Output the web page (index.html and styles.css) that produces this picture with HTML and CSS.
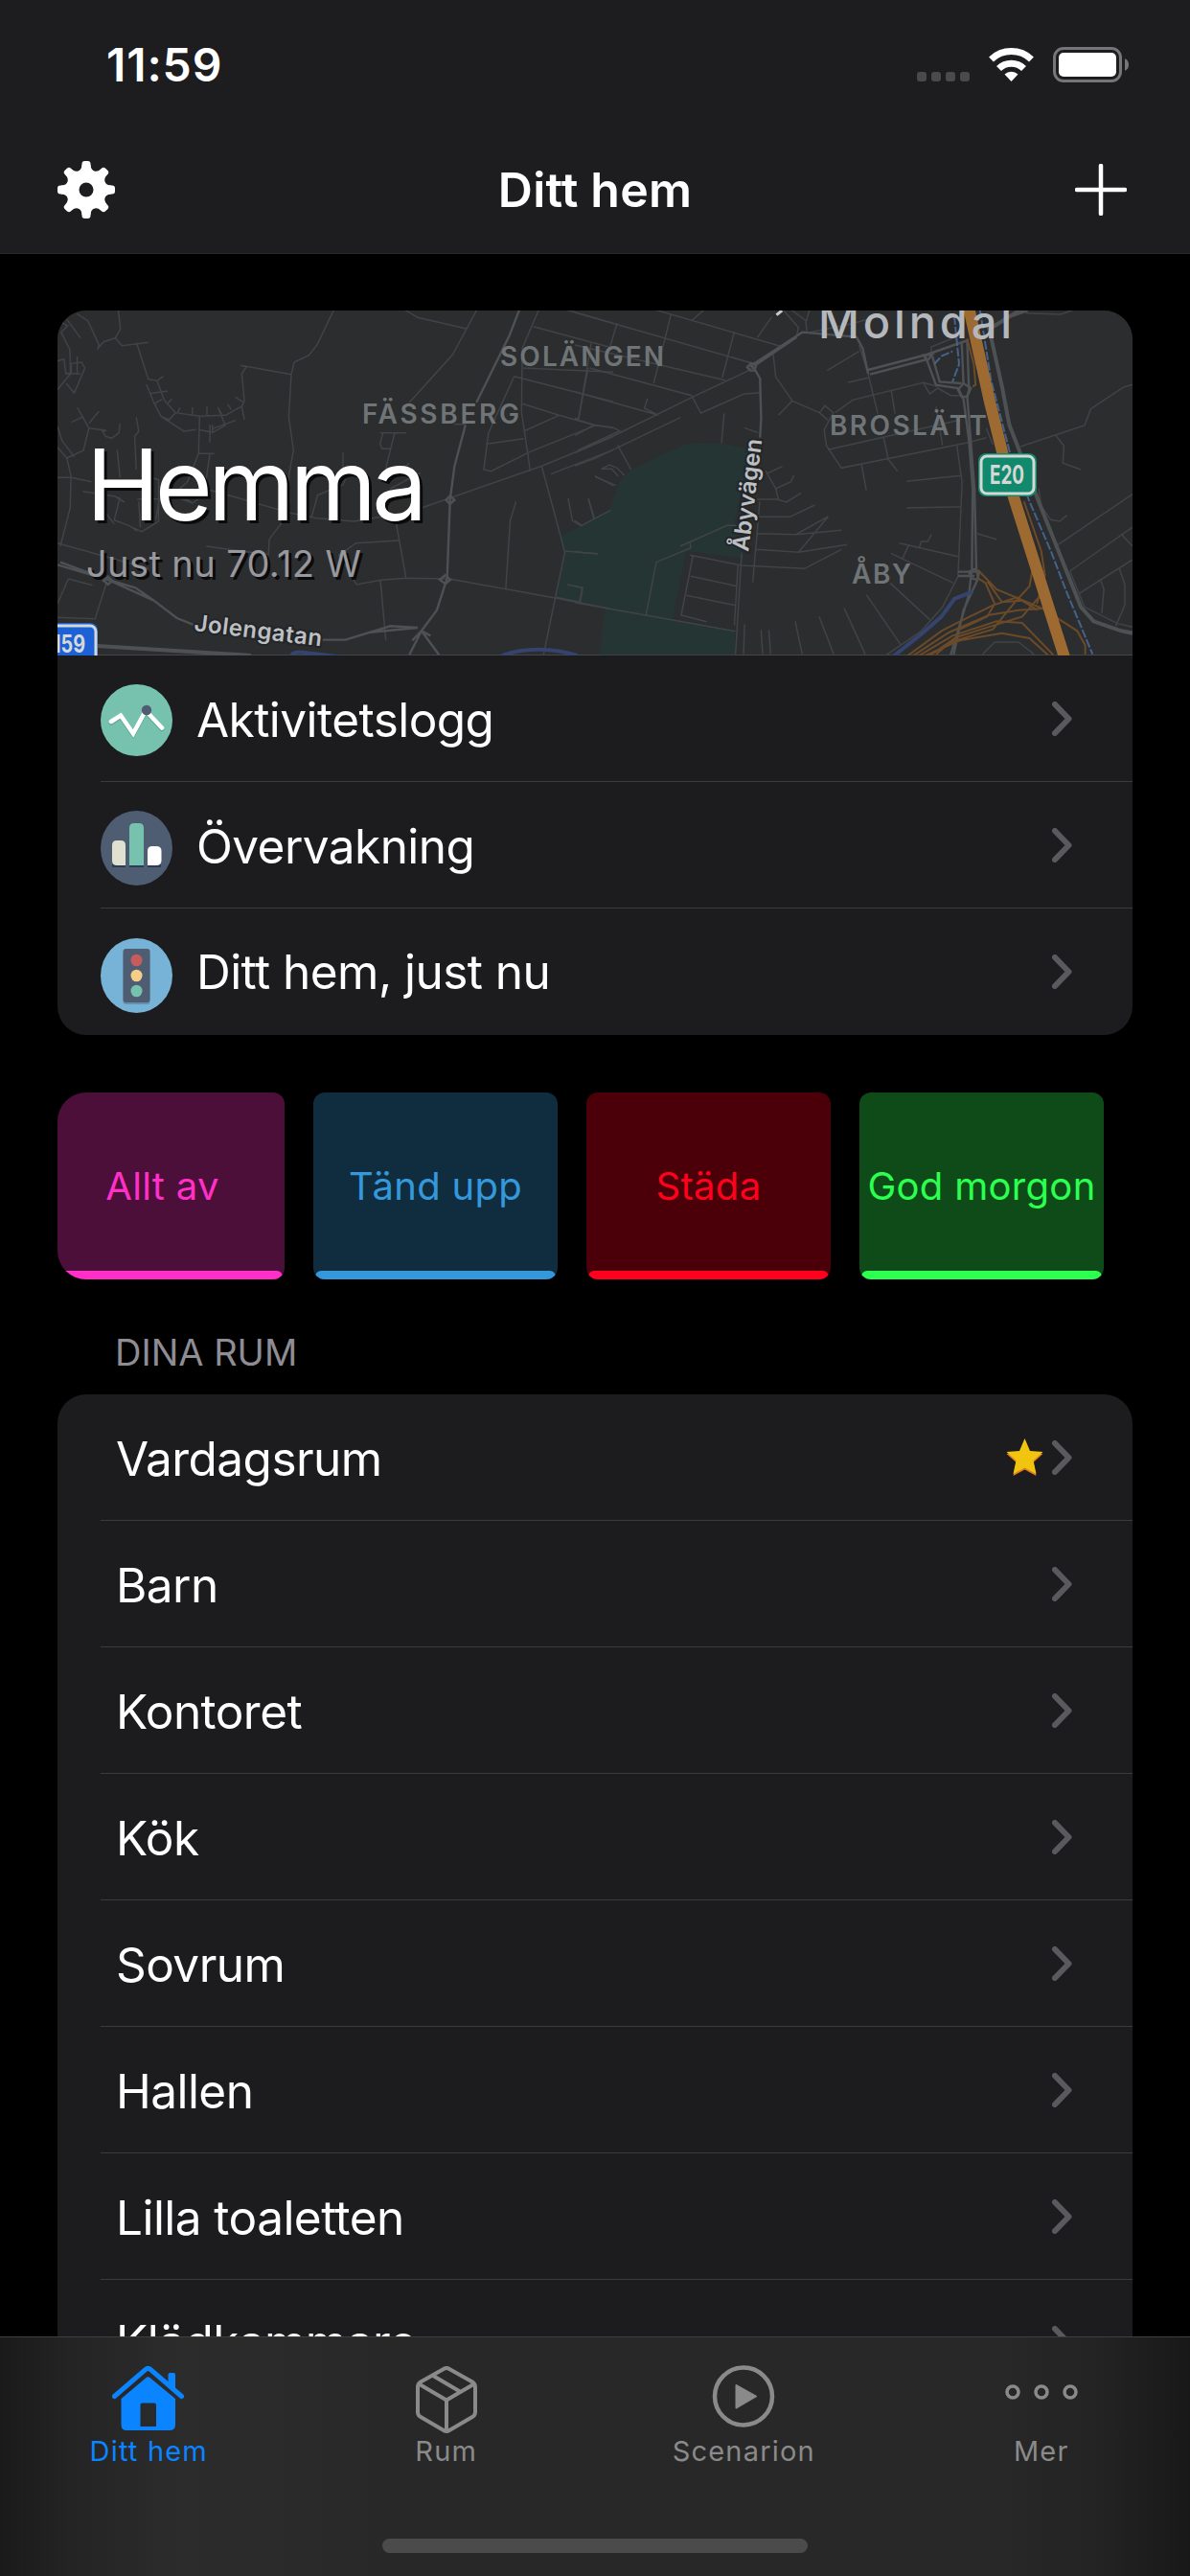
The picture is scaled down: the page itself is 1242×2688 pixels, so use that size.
FILE: index.html
```
<!DOCTYPE html>
<html lang="sv">
<head>
	<meta charset="UTF-8">
	<title>Ditt hem</title>
	<link rel="stylesheet" href="styles.css">
</head>
<body>
	<svg width="0" height="0" class="defs">
		<symbol id="chevron" viewBox="0 0 21 36">
			<path d="M3 3L17.500 18L3 33" fill="none" stroke="#5a5a5e" stroke-width="6" stroke-linecap="round" stroke-linejoin="round"/>
		</symbol>
	</svg>
	<div class="phone">
		<header class="top">
			<div class="statusBar">
				<span class="time">11:59</span>
				<div class="statusIcons">
					<svg width="222" height="38" viewBox="957 49 222 38">
						<g fill="#4a4a4c">
							<rect x="957" y="75" width="10" height="10" rx="3"/>
							<rect x="972" y="75" width="10" height="10" rx="3"/>
							<rect x="987" y="75" width="10" height="10" rx="3"/>
							<rect x="1002" y="75" width="10" height="10" rx="3"/>
						</g>
						<path d="M1055.500 85L1048.500 77.500A10.500 10.500 0 0 1 1062.500 77.500Z" fill="#fff"/>
						<path d="M1042.500 71.500A18.500 18.500 0 0 1 1068.500 71.500M1034.500 62A30.500 30.500 0 0 1 1076.500 62" fill="none" stroke="#fff" stroke-width="7"/>
						<rect x="1100.500" y="50.500" width="69" height="34" rx="9.500" fill="none" stroke="#767678" stroke-width="3"/>
						<rect x="1105" y="55" width="60" height="25" rx="5" fill="#fff"/>
						<path d="M1174 61Q1178 63 1178 67.500T1174 74Z" fill="#767678"/>
					</svg>
				</div>
			</div>
			<nav class="navBar">
				<svg width="60" height="60" viewBox="-30 -30 60 60">
					<g fill="#fff">
						<g id="teeth">
							<rect x="-4.500" y="-30" width="9" height="60" rx="3"/>
							<path d="M-9 -19Q-4.500 -21 -4.500 -26H4.500Q4.500 -21 9 -19V19Q4.500 21 4.500 26H-4.500Q-4.500 21 -9 19Z"/>
						</g>
						<use href="#teeth" transform="rotate(45)"/>
						<use href="#teeth" transform="rotate(90)"/>
						<use href="#teeth" transform="rotate(135)"/>
						<circle r="20.500"/>
					</g>
					<circle r="7.500" fill="#1d1d1f"/>
				</svg>
				<h1>Ditt hem</h1>
				<svg width="54" height="54" viewBox="0 0 54 54">
					<path d="M27 2V52M2 27H52" stroke="#fff" stroke-width="4.500" stroke-linecap="round"/>
				</svg>
			</nav>
		</header>

		<main>
			<section class="card home">
				<div class="map">
					<svg width="1122" height="360" viewBox="60 324 1122 360">
						<!-- left half of the map -->
						<g transform="translate(40 310) scale(.38265 .33333)" class="roads">
							<path class="park" d="M1424 750L1558 668L1583 580L1616 540L1767 460L1865 457L1945 480L1925 570L1895 720L1925 818L1767 795L1730 1008L1900 1046V1120H1530L1545 976L1412 940L1435 800Z"/>
							<path d="M218 40L224 100L210 128L228 152L301 142M210 128L178 140L163 160L165 148L135 74L105 52M268 143L300 257L324 262L343 322L374 362L440 373L510 370L555 342L562 325L555 240L568 218L552 214L690 242M690 242L698 204L738 182L760 150L806 40M690 242L683 374L696 480L683 560L686 640L668 700L630 758L628 806L458 780"/>
							<path d="M374 362L357 384L335 374L315 330L295 274M335 374L397 420L430 415M324 262L341 248M303 302L353 294M315 335L337 320M352 333L364 320M380 362L386 346M420 368V345M460 370V343M500 366L490 345L510 402L475 424L437 415M526 352L516 335M555 342L562 384M558 328L537 313M475 424V400M475 412L538 386M440 373L437 490L406 580L380 605M437 490H480M468 490L458 570M468 400V455"/>
							<path d="M52 200L70 194L75 240L90 236V208L118 204L127 222L98 300L76 270M106 186V240M52 290L88 240L86 164L62 110L80 90L52 72M78 70L115 128M75 240H115M106 345L138 410L123 480L78 504L52 470M52 404L65 450L98 500M138 410L186 418L175 420L184 436L200 442L220 425L223 396M90 392L123 374M138 395L165 358M267 376L274 420L263 436L267 540M215 478L223 565M78 504L89 560L87 660L60 780"/>
							<path d="M52 565H89L145 578M121 608L210 624L235 642M205 622L222 630L207 698L240 712L282 735L328 702V572L310 566M180 670L207 710M270 632H330L320 700M278 720L274 640M254 720L270 732M385 630L420 645L470 605L500 614L687 676L760 692L860 702L975 680M420 645L400 630M745 690L762 620L830 588L838 570M831 487V545M975 700L1003 880M932 425H1003M972 425L949 530L955 570L1012 520M940 425L932 460L938 475H962M1042 550L960 600"/>
							<path d="M52 770L300 850M1012 330L1130 180L1196 40M1000 40L1035 64L1170 100M1165 398H1135M984 762L867 770L820 808L868 900L935 886L1003 880L1120 882L1410 942L1560 976M933 886L948 1075M1303 640L1287 700L1275 912M52 1003L155 1007L187 890M82 882L148 902M82 882L52 960M1410 942L1378 1120M1436 795L1526 804M1443 900L1485 910L1478 955L1412 940"/>
							<path d="M1365 40L1320 160L1318 360L1342 545M1350 92L1568 160M1440 40L1568 82M1508 145L1474 380M1298 248L1228 425L1215 540L1235 545L1340 485L1520 402L1420 370L1316 332M1298 248L1568 328M1322 222L1568 235M1220 460L1324 443M1324 420L1420 370M1568 408L1520 402M1045 660L1375 528L1568 437M1398 554L1568 478M1373 530L1425 750L1436 800L1410 940M1445 630L1457 700L1480 716L1560 668M1500 632L1517 692M1518 560L1568 590"/>
							<g class="main">
								<path d="M1312 40L1285 120L1195 330M1165 400L1135 530L1123 635L1115 880L1087 980L1045 1045L1012 1120M1045 1045L1093 1120M1045 1045L1020 1075M1035 1035L960 1030L838 1073H775M1035 1035L900 1050M52 838L190 885L265 910L315 950L378 1005L440 1033M60 830L190 885L315 950M1070 1060L1045 1045"/>
								<path d="M1112 635L1123 622L1135 635L1123 648ZM1095 885L1110 870L1124 885L1110 898ZM178 888L190 875L202 888L190 900Z"/>
								<path class="wide" d="M160 1092L580 1122"/>
							</g>
							<path d="M690 1120Q700 1110 720 1112L850 1130M1265 1122Q1360 1085 1470 1122" class="water"/>
						</g>
						<!-- right half of the map -->
						<g transform="translate(600 310) scale(.38265 .33333)" class="roads">
							<path d="M0 48L496 211M220 40L565 155M115 82L95 160M262 55L215 270M435 108L402 252M0 150L410 260M40 222L318 308L344 363L460 304L505 299M36 222L10 380M0 296L228 370L190 348L198 318M0 382L52 400L108 410L130 424L125 420M52 400L0 434M0 380H10M320 72L352 40M498 126L537 62M0 528L55 505L288 377M407 364L400 457M117 464L153 540M72 538L95 525L115 535L135 558M72 538H100L118 560M55 562L112 590M37 630L52 695M0 700L20 715M462 409L500 425"/>
							<path d="M0 488L110 432L330 308L470 232L620 110M8 480L120 420"/>
							<path d="M541 180L548 250L593 325L555 370M593 325L667 362L682 340L705 362L680 415L686 465L727 535L1073 455L1122 440M667 362L690 385M690 478L1050 385M710 362L758 322L950 268L968 303L990 285L1025 308H1055M950 268L990 280M863 292L873 365M985 343L1003 465M842 440L855 508L880 545M782 525L795 605M688 230L775 170M745 267L800 253M775 150L800 240L826 365M1122 410L1140 462"/>
							<path d="M905 577L1052 559M905 660L1055 656M1042 465L1056 580L1045 875L1003 970L945 1045L850 1120M1056 740M1097 740L1150 758M862 802L1032 895M885 770L1045 812M893 820L910 778M940 782L945 765H963L972 743M860 895L968 1010M795 932L890 1090M734 973L792 1118M666 1000L706 1118M601 1015L620 1118M529 1042L534 1118M508 1042L512 1118M463 1024L460 1118"/>
							<path d="M520 543L548 600L555 633M525 552L566 530M548 600L590 577L597 558M485 633H550L577 642L617 613M500 688H587L654 651M497 740L603 743L727 730M494 790L610 799L691 687M603 743L691 687M610 799L743 775M455 840L626 850L727 790M504 640L497 740L485 893M445 840L435 1028M314 808L455 840M322 810L290 996L360 1016M316 874L442 905M304 934L438 965M287 780L415 715H440M314 768L316 785L222 830L194 995M0 797L62 803M0 906L20 910L13 955M0 956L438 1046M455 800L438 1120"/>
							<path d="M1215 468L1390 402L1407 350L1495 283L1521 274M1310 430L1334 466L1331 520L1380 540M1265 600L1272 655L1298 697L1322 702L1342 683M1318 775L1521 617M1350 858L1521 720M1375 928L1521 822M1350 858L1390 970L1480 1022L1521 1033M1490 742L1521 780M1485 850L1500 900V965L1475 1030M1433 882L1443 915L1437 990M1112 1118L1145 1080H1210L1252 1118M1230 50L1325 54L1360 40M972 180V156L1050 120M640 40L630 80L633 110M568 40L610 95L605 120M590 40L632 75M635 112L750 85L830 60"/>
							<g class="main">
								<path d="M505 440L508 380L505 255L490 225L480 215L540 170L620 110L700 118L768 125L785 160L800 240M495 211L605 125M800 228L960 180L1072 135M805 242L960 195M955 182L985 275L1045 285L1060 320L1075 450L1085 600L1083 850L1075 930L1025 1120M975 185L995 265L1055 270M1055 140L1060 270M1070 140L1075 290L1070 310L1090 600L1095 850L1100 880L1060 980L1033 1120M1045 860H1100M1045 873H1090"/>
								<path d="M950 182L962 198L975 180ZM1045 290L1060 270L1080 285L1070 312H1055ZM470 220L480 207L495 212L490 230H478ZM1075 860L1090 852L1102 865L1098 885L1080 880Z"/>
								<path class="wide" d="M1235 40L1190 58L1130 100L1165 280L1185 400L1212 480L1265 640L1380 970L1415 1015L1490 1045L1521 1052M1215 40L1145 90"/>
							</g>
							<path class="water" d="M868 1125L945 1055L1000 1000L1035 945L1085 922"/>
							<path class="rail" d="M1105 40L1135 260L1185 480L1240 640L1300 800L1340 920L1412 1118M1035 60L1048 210L1030 265M980 210L1000 185L1030 170"/>
							<g class="ramps">
								<path d="M905 1125L1000 1045L1060 1010L1140 965L1205 940L1262 980M920 1125L1020 1050L1130 995L1210 980L1275 975M935 1125L1030 1060L1150 1015L1220 1020L1305 1120M950 1125L1050 1075L1165 1052L1240 1068L1290 1120M965 1125L1040 1065L1220 1000L1265 940M985 1118L1025 1080L1140 1040L1200 955L1240 905L1250 840"/>
								<path d="M1100 855L1150 915L1275 975L1370 1045L1392 1090V1118M1100 880L1120 895L1145 960L1125 1000L1050 1040M1125 890L1165 955L1220 950M1225 640L1272 795L1282 870L1260 960M1070 130L1088 210L1093 275L1085 280"/>
							</g>
							<path class="motorway" d="M1075 36L1132 330L1195 620L1335 1126"/>
							<path class="tip" d="M550 56L565 42"/>
						</g>
						<g class="district">
							<text x="522" y="382" textLength="171">SOLÄNGEN</text>
							<text x="378" y="442" textLength="164">FÄSSBERG</text>
							<text x="866" y="454" textLength="164">BROSLÄTT</text>
							<text x="889" y="609" textLength="62">ÅBY</text>
						</g>
						<text class="town" x="854" y="353" textLength="202">Mölndal</text>
						<text class="street" transform="translate(202 658) rotate(7)" textLength="134">Jolengatan</text>
						<text class="street" transform="translate(781 576) rotate(-83)" textLength="118">Åbyvägen</text>
						<rect x="1021" y="473" width="61" height="45" rx="8" fill="#11896c"/>
						<rect x="1024" y="476" width="55" height="39" rx="6" fill="none" stroke="#d5d8d6" stroke-width="3"/>
						<text class="shield" x="1033" y="505" font-size="27" textLength="36" lengthAdjust="spacingAndGlyphs">E20</text>
						<rect x="30" y="650" width="72" height="50" rx="8" fill="#1c62d6"/>
						<rect x="33" y="653" width="67" height="50" rx="6" fill="none" stroke="#d5d8d6" stroke-width="3"/>
						<text class="shield" x="55" y="681" font-size="25" textLength="34" lengthAdjust="spacingAndGlyphs">159</text>
					</svg>
					<div class="mapText">
						<h2>Hemma</h2>
						<p>Just nu 70.12 W</p>
					</div>
				</div>
				<div class="row">
					<svg class="icon" viewBox="0 0 75 78">
						<circle cx="37.500" cy="37.500" r="37.500" fill="#77c2ae"/>
						<path d="M11 40.500L21 34L34 53L47 29L64 47" fill="none" stroke="#5fa896" stroke-width="4.500" stroke-linecap="round"/>
						<path d="M11 39L21 32.500L34 51.500L47 27.500L64 45.500" fill="none" stroke="#fff" stroke-width="4.500" stroke-linecap="round"/>
						<circle cx="48" cy="27" r="5.200" fill="#4f5d73"/>
					</svg>
					<span class="label">Aktivitetslogg</span>
					<svg class="chevron"><use href="#chevron"/></svg>
				</div>
				<div class="row">
					<svg class="icon" viewBox="0 0 75 78">
						<ellipse cx="37.500" cy="39" rx="37.500" ry="39" fill="#4f5d73"/>
						<path d="M12 57.500H26M30 57.500H45M49 57.500H63" stroke="#2c3c58" stroke-width="3"/>
						<path d="M26 57V36Q26 31 21 31H17Q12 31 12 36V52Q12 57 17 57Z" fill="#e0e0d1"/>
						<path d="M30 57V18Q30 13 35 13H40Q45 13 45 18V57Z" fill="#77c2ae"/>
						<path d="M49 57V42Q49 37 54 37H58Q63.500 37 63.500 42V52Q63.500 57 58 57Z" fill="#fff"/>
					</svg>
					<span class="label">Övervakning</span>
					<svg class="chevron"><use href="#chevron"/></svg>
				</div>
				<div class="row">
					<svg class="icon" viewBox="0 0 75 78">
						<ellipse cx="37.500" cy="39" rx="37.500" ry="39" fill="#76b3d6"/>
						<rect x="23.500" y="13" width="28" height="56" rx="3" fill="#6291af"/>
						<rect x="23.500" y="11" width="28" height="56" rx="3" fill="#4f5d73"/>
						<ellipse cx="37.500" cy="23" rx="6" ry="6.300" fill="#c75c5c"/>
						<ellipse cx="37.500" cy="39" rx="6" ry="6.300" fill="#f5cf87"/>
						<ellipse cx="37.500" cy="55" rx="6" ry="6.300" fill="#77c2ae"/>
					</svg>
					<span class="label">Ditt hem, just nu</span>
					<svg class="chevron"><use href="#chevron"/></svg>
				</div>
			</section>

			<section class="scenes">
				<div class="scene pink"><span>Allt av</span></div>
				<div class="scene blue"><span>Tänd upp</span></div>
				<div class="scene red"><span>Städa</span></div>
				<div class="scene green"><span>God morgon</span></div>
			</section>

			<h3>DINA RUM</h3>

			<section class="card rooms">
				<div class="row">
					<span class="label">Vardagsrum</span>
					<svg class="star" width="39" height="39" viewBox="0 0 39 39">
						<path d="M19.500 2L25 14.500L38.500 16L28.500 25L31.500 39L19.500 32.500L7.500 39L10.500 25L.5 16L14 14.500Z" fill="#e67e22"/>
						<path d="M19.500 0L25 13L38.500 14L28.500 23L31.500 37L19.500 30.500L7.500 37L10.500 23L.5 14L14 13Z" fill="#f1c40f"/>
					</svg>
					<svg class="chevron"><use href="#chevron"/></svg>
				</div>
				<div class="row"><span class="label">Barn</span><svg class="chevron"><use href="#chevron"/></svg></div>
				<div class="row"><span class="label">Kontoret</span><svg class="chevron"><use href="#chevron"/></svg></div>
				<div class="row"><span class="label">Kök</span><svg class="chevron"><use href="#chevron"/></svg></div>
				<div class="row"><span class="label">Sovrum</span><svg class="chevron"><use href="#chevron"/></svg></div>
				<div class="row"><span class="label">Hallen</span><svg class="chevron"><use href="#chevron"/></svg></div>
				<div class="row"><span class="label">Lilla toaletten</span><svg class="chevron"><use href="#chevron"/></svg></div>
				<div class="row"><span class="label">Klädkammare</span><svg class="chevron"><use href="#chevron"/></svg></div>
			</section>
		</main>

		<footer>
			<div class="tabs">
				<div class="tab active">
					<svg width="76" height="76" viewBox="117 2467 76 76">
						<path d="M119.500 2500.500L152 2472.500Q154.500 2470 157 2472.500L189.500 2500.500" fill="none" stroke="#0a84ff" stroke-width="5" stroke-linecap="round"/>
						<path d="M175.500 2489V2478Q175.500 2476 177.500 2476H181Q183 2476 183 2478V2495Z" fill="#0a84ff"/>
						<path fill-rule="evenodd" d="M126.500 2503L152 2481.500Q154.500 2479 157 2481.500L183 2503V2530Q183 2536 177 2536H132Q126.500 2536 126.500 2530ZM148.500 2507.500Q146.500 2507.500 146.500 2509.500V2532H163V2509.500Q163 2507.500 161 2507.500Z" fill="#0a84ff"/>
					</svg>
					<span>Ditt hem</span>
				</div>
				<div class="tab">
					<svg width="76" height="76" viewBox="427 2467 76 76">
						<g fill="none" stroke="#8a8a8a" stroke-width="4" stroke-linejoin="round">
							<path d="M462 2472Q465 2470 468 2472L492 2485.500Q495 2487.500 495 2491V2517Q495 2520.500 492 2522L468 2536Q465 2538 462 2536L438 2522Q435 2520.500 435 2517V2491Q435 2487.500 438 2485.500Z"/>
							<path d="M436 2487.500L465 2504.500L494 2487.500M465 2504.500V2537M451 2479L479 2495.500"/>
						</g>
					</svg>
					<span>Rum</span>
				</div>
				<div class="tab">
					<svg width="76" height="76" viewBox="738 2467 76 76">
						<circle cx="776" cy="2500.500" r="30" fill="none" stroke="#8a8a8a" stroke-width="4.500"/>
						<path d="M768.500 2489L789 2500.500L768.500 2512.500Z" fill="#8a8a8a" stroke="#8a8a8a" stroke-width="2" stroke-linejoin="round"/>
					</svg>
					<span>Scenarion</span>
				</div>
				<div class="tab">
					<svg width="76" height="76" viewBox="1048 2467 76 76">
						<g fill="none" stroke="#8a8a8a" stroke-width="3.500">
							<circle cx="1056" cy="2496" r="6"/>
							<circle cx="1086" cy="2496" r="6"/>
							<circle cx="1116" cy="2496" r="6"/>
						</g>
					</svg>
					<span>Mer</span>
				</div>
			</div>
			<div class="homeIndicator"></div>
		</footer>
	</div>
</body>
</html>
```
FILE: styles.css
```
* {
	box-sizing: border-box;
}
body, h1, h2, h3, p {
	margin: 0;
	font-weight: 400;
}
body {
	background: #000;
	color: #fff;
	font-family: Inter, "Liberation Sans", sans-serif;
}
svg {
	display: block;
	flex-shrink: 0;
}
.defs {
	position: absolute;
}
.phone {
	width: 1242px;
	height: 2688px;
	display: flex;
	flex-direction: column;
	overflow: hidden;
}

/* status bar and title */
.top {
	height: 265px;
	flex-shrink: 0;
	background: #1d1d1f;
	border-bottom: 1px solid #29292b;
}
.statusBar {
	height: 132px;
	padding: 49px 63px 0 111px;
	display: flex;
	justify-content: space-between;
}
.time {
	font-size: 48px;
	line-height: 38px;
	font-weight: 600;
	letter-spacing: 0.9px;
}
.navBar {
	height: 132px;
	padding: 0 66px 0 60px;
	display: flex;
	align-items: center;
	justify-content: space-between;
}
.navBar h1 {
	font-size: 50px;
	font-weight: 600;
	letter-spacing: 0.2px;
}

/* scrolling content */
main {
	flex: 1;
	min-height: 0;
	overflow: hidden;
	padding: 59px 60px 0;
}
.card {
	background: #1c1c1e;
	border-radius: 30px;
	overflow: hidden;
}
.map {
	height: 360px;
	position: relative;
	background: #2c2d2f;
	border-bottom: 1px solid #464648;
}
.mapText {
	position: absolute;
	left: 30px;
	top: 122px;
	text-shadow: 3px 3px 0 #0a0a0b;
}
.mapText h2 {
	font-size: 103px;
	line-height: 119px;
	letter-spacing: -4.7px;
}
.mapText p {
	font-size: 38px;
	line-height: 46px;
	letter-spacing: 0.4px;
	color: #98989f;
}
.roads path {
	fill: none;
	stroke: #414346;
	stroke-width: 1.5;
	vector-effect: non-scaling-stroke;
}
.roads .main path {
	stroke: #4d5154;
	stroke-width: 2.4;
}
.roads .main path.wide {
	stroke-width: 4;
}
.roads path.park {
	fill: #253534;
	stroke: none;
}
.roads path.water {
	stroke: #34446e;
	stroke-width: 4;
}
.roads path.rail {
	stroke: #45628a;
	stroke-width: 2;
	stroke-dasharray: 9 2;
}
.roads .ramps path {
	stroke: #6b4a27;
	stroke-width: 2;
}
.roads path.motorway {
	stroke: #9d6a32;
	stroke-width: 12;
}
.roads path.tip {
	stroke: #c9cbce;
	stroke-width: 3;
}
.district {
	font-size: 28px;
	font-weight: 600;
	fill: #6f7477;
}
.town {
	font-size: 47px;
	font-weight: 500;
	fill: #b4b7bb;
}
.street {
	font-size: 24px;
	font-weight: 600;
	fill: #bcc0c4;
	stroke: #242527;
	stroke-width: 4px;
	paint-order: stroke;
}
.shield {
	font-weight: 700;
	fill: #d5d8d6;
}

/* list rows */
.row {
	height: 132px;
	margin-left: 45px;
	padding-right: 63px;
	display: flex;
	align-items: center;
	border-bottom: 1px solid #3b3b3d;
}
.row:last-child {
	border-bottom: none;
}
.label {
	flex: 1;
	padding-top: 2px;
	font-size: 49.5px;
	letter-spacing: -0.55px;
}
.home .label {
	margin-left: 25px;
}
.rooms .label {
	margin-left: 16px;
}
.row:last-child .label {
	padding-top: 0;
}
.rooms .row:last-child .label {
	padding-bottom: 3px;
}
.icon {
	width: 75px;
	height: 78px;
	margin-top: 7px;
}
.chevron {
	width: 21px;
	height: 36px;
}
.star {
	margin-right: 9px;
}

/* scene buttons */
.scenes {
	display: flex;
	gap: 30px;
	margin-top: 60px;
}
.scene {
	width: 255px;
	height: 195px;
	position: relative;
	display: flex;
	align-items: center;
	justify-content: center;
	border-radius: 12px;
	overflow: hidden;
	font-size: 40px;
	letter-spacing: 0.3px;
	white-space: nowrap;
}
.scene::after {
	content: "";
	position: absolute;
	left: 2px;
	right: 2px;
	bottom: 0;
	height: 9px;
	border-radius: 9px 9px 4px 4px;
	background: currentColor;
}
.pink {
	width: 237px;
	padding-right: 18px;
	border-radius: 30px 12px 12px 30px;
	background: #4c0f3a;
	color: #ff2fc8;
}
.pink::after {
	left: 0;
	border-radius: 0 9px 4px 0;
}
.blue {
	background: #102d40;
	color: #3498db;
}
.red {
	background: #4b0009;
	color: #ff001d;
}
.green {
	background: #0e4b18;
	color: #2cff50;
}
h3 {
	height: 120px;
	padding: 53px 0 0 60px;
	font-size: 38px;
	line-height: 46px;
	color: #8d8d93;
}

/* tab bar */
footer {
	height: 250px;
	flex-shrink: 0;
	border-top: 1px solid #3f3f41;
	background: linear-gradient(90deg, #1a1a1a 0, #242424 75px, #2c2c2c 190px, #282828 420px, #282828 1040px, #232323 1150px, #181818 1242px);
}
.tabs {
	height: 210px;
	display: flex;
}
.tab {
	flex: 1;
	display: flex;
	flex-direction: column;
	align-items: center;
	padding-top: 28px;
	color: #8a8a8a;
	font-size: 29px;
	font-weight: 400;
	line-height: 30px;
	letter-spacing: 1.2px;
}
.active {
	color: #0a84ff;
}
.homeIndicator {
	width: 444px;
	height: 15px;
	margin: 0 auto;
	border-radius: 8px;
	background: #4b4b4b;
}
```
